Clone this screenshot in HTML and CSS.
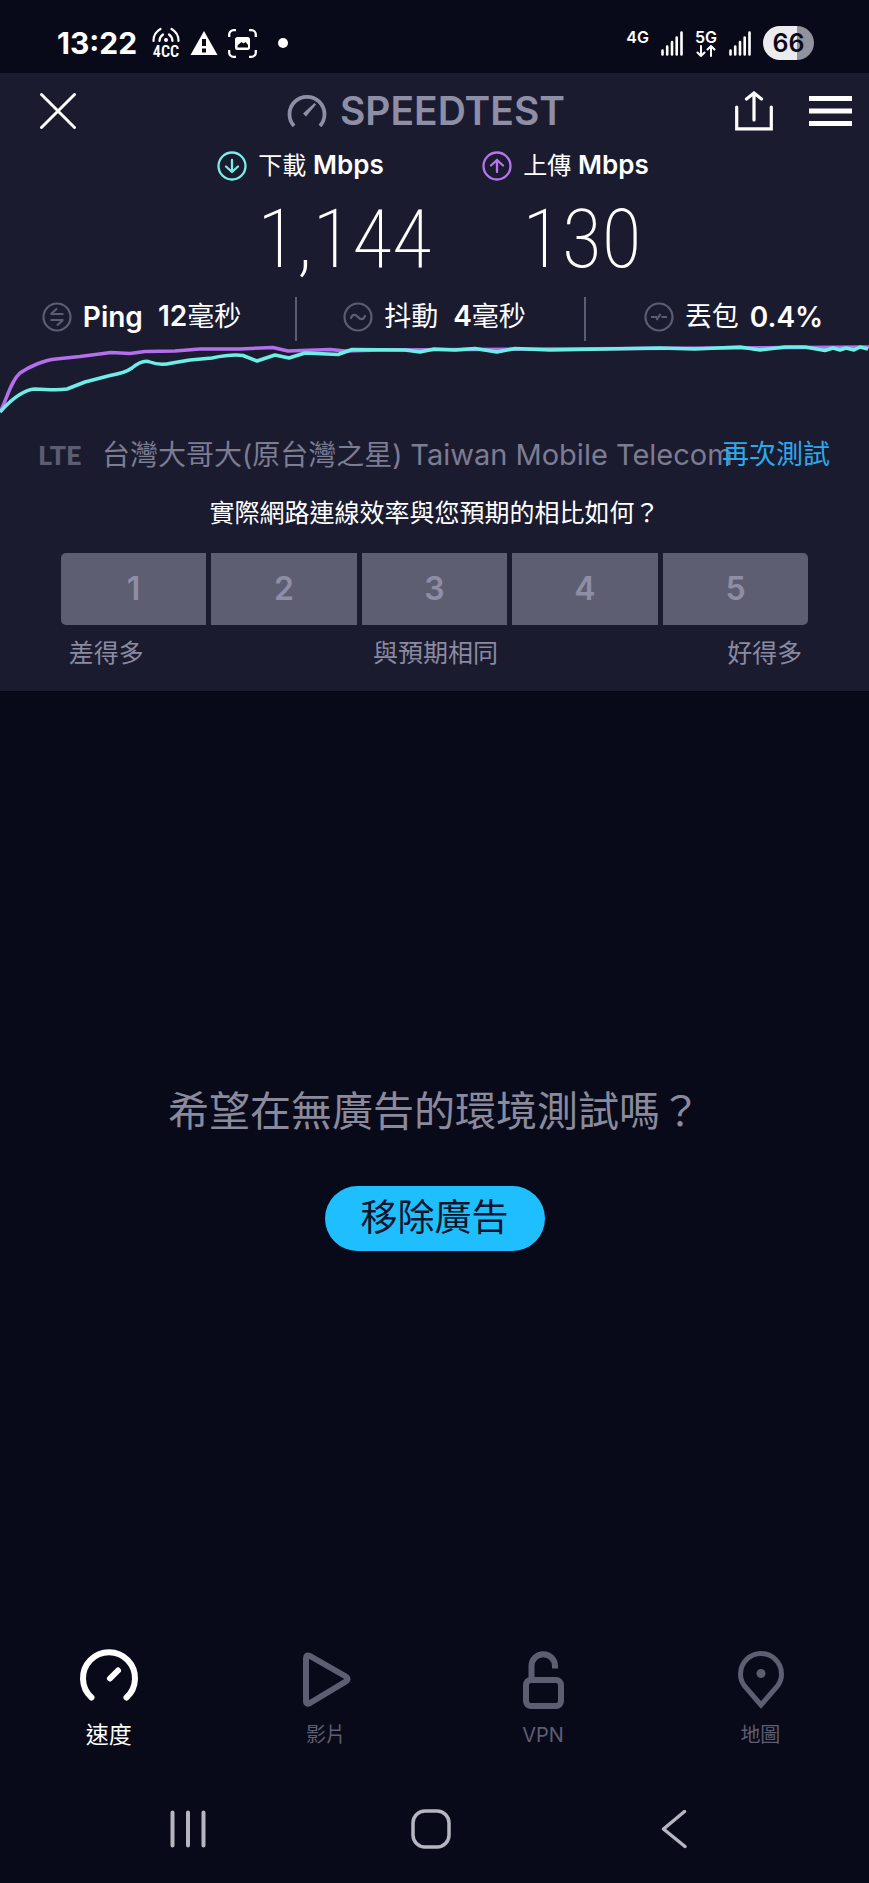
FILE: index.html
```html
<!DOCTYPE html>
<html lang="zh-Hant">
<head>
<meta charset="utf-8">
<meta name="viewport" content="width=device-width, initial-scale=1">
<title>Speedtest</title>
<link rel="stylesheet" href="styles.css">
</head>
<body>
<div class="app">
  <div class="status">
    <div class="status-left">
      <span class="clock">13:22</span>
      <svg class="signal-cc" width="28" height="36" viewBox="0 0 28 36" fill="none" stroke="#fff" stroke-width="2.2" stroke-linecap="round">
        <path d="M7.500 16A8 8 0 0 1 11 9.500M1.500 16A13.500 13.500 0 0 1 8.500 4M20.500 16A8 8 0 0 0 17 9.500M26.500 16A13.500 13.500 0 0 0 19.500 4"/>
        <circle cx="14" cy="15" r="2" fill="#fff" stroke="none"/>
        <text class="carrier-agg" x="14" y="32" text-anchor="middle">4CC</text>
      </svg>
      <svg width="28" height="26" viewBox="0 0 28 26"><path d="M14 1L27.500 25H.5z" fill="#fff"/><path d="M14 9v7M14 18.500v4" stroke="#090a19" stroke-width="4"/></svg>
      <svg width="29" height="29" viewBox="0 0 29 29" fill="none" stroke="#fff" stroke-width="2.300">
        <path d="M1.200 8V5.500a4.300 4.300 0 0 1 4.300-4.300H8M21 1.200h2.500a4.300 4.300 0 0 1 4.300 4.300V8M27.800 21v2.500a4.300 4.300 0 0 1-4.300 4.300H21M8 27.800H5.500a4.300 4.300 0 0 1-4.300-4.300V21"/>
        <rect x="7" y="8" width="15" height="13" rx="2.500" fill="#fff" stroke="none"/>
        <path d="M9.500 18.500v-2l4-3.500 2 1.500 2-1.500 2.500 3v2.500z" fill="#090a19" stroke="none"/>
      </svg>
      <span class="dot"></span>
    </div>
    <div class="status-right">
      <span class="net">4G</span>
      <svg width="22" height="25" viewBox="0 0 22 25" stroke="#fff" stroke-width="2.600" stroke-linecap="round"><path d="M1.500 19.500v4M6.200 15.500v8M11 11v12.500M15.700 6.500v17M20.500 1.500v22"/></svg>
      <span class="net">5G
        <svg width="20" height="12" viewBox="0 0 20 12" fill="none" stroke="#fff" stroke-width="2" stroke-linecap="round"><path d="M5 1v10M1.500 7.500L5 11l3.500-3.500M15 11V1M11.500 4.500L15 1l3.500 3.500"/></svg>
      </span>
      <svg width="22" height="25" viewBox="0 0 22 25" stroke="#fff" stroke-width="2.600" stroke-linecap="round"><path d="M1.500 19.500v4M6.200 15.500v8M11 11v12.500M15.700 6.500v17M20.500 1.500v22"/></svg>
      <span class="battery">66</span>
    </div>
  </div>

  <main class="panel">
    <header class="top">
      <button class="icon-btn close" aria-label="關閉"><svg width="36" height="36" viewBox="0 0 36 36" stroke="#fff" stroke-width="3" stroke-linecap="round"><path d="M1.500 1.500l33 33M34.500 1.500l-33 33"/></svg></button>
      <h1 class="brand">
        <svg width="40" height="36" viewBox="0 0 40 36" fill="none" stroke="#8e8ea6" stroke-width="3.800"><path d="M7 33A17.500 17.500 0 1 1 33 33"/><path d="M16 20.500L27.500 10l1.500 1.500L19 23.500z" fill="#8e8ea6" stroke="none"/></svg>
        SPEEDTEST
      </h1>
      <div class="actions">
        <button class="icon-btn" aria-label="分享"><svg width="38" height="40" viewBox="0 0 38 40" fill="none" stroke="#fff" stroke-width="3.200" stroke-linecap="round"><path d="M1.700 16v21.800h34.600V16M19 29V2M11.500 8L19 2l7.500 6"/></svg></button>
        <button class="icon-btn" aria-label="選單"><svg width="43" height="30" viewBox="0 0 43 30" stroke="#fff" stroke-width="5"><path d="M0 2.500h43M0 15h43M0 27.500h43"/></svg></button>
      </div>
    </header>

    <section class="speeds">
      <div class="speed">
        <h2 class="speed-label">
          <svg width="30" height="30" viewBox="0 0 30 30" fill="none" stroke="#78eee6" stroke-width="2.300" stroke-linecap="round" stroke-linejoin="round"><circle cx="15" cy="15" r="13.500"/><path d="M15 9v12M9 15.500l6 5.500 6-5.500"/></svg>
          <span>下載 <b>Mbps</b></span>
        </h2>
        <p class="speed-value">1,144</p>
      </div>
      <div class="speed">
        <h2 class="speed-label">
          <svg width="30" height="30" viewBox="0 0 30 30" fill="none" stroke="#b873ef" stroke-width="2.300" stroke-linecap="round" stroke-linejoin="round"><circle cx="15" cy="15" r="13.500"/><path d="M15 21V9M9 14.500L15 9l6 5.500"/></svg>
          <span>上傳 <b>Mbps</b></span>
        </h2>
        <p class="speed-value">130</p>
      </div>
    </section>

    <section class="stats">
      <div class="stat">
        <svg width="30" height="30" viewBox="0 0 30 30" fill="none" stroke="#5c5c72" stroke-width="2.200"><circle cx="15" cy="15" r="13.500"/><path d="M8.500 12h13M9 12l6-5.500M21.500 18h-13M21 18l-6 5.500"/></svg>
        <b class="stat-name">Ping</b><span><b>12</b>毫秒</span>
      </div>
      <div class="stat">
        <svg width="30" height="30" viewBox="0 0 30 30" fill="none" stroke="#5c5c72" stroke-width="2.200" stroke-linecap="round"><circle cx="15" cy="15" r="13.500"/><path d="M8 16c1.500-4 4.500-4 7-1s5.500 3 7-1"/></svg>
        <span class="stat-name">抖動</span><span><b>4</b>毫秒</span>
      </div>
      <div class="stat loss">
        <svg width="30" height="30" viewBox="0 0 30 30" fill="none" stroke="#5c5c72" stroke-width="2.200"><circle cx="15" cy="15" r="13.500"/><path d="M7 15h6M17.500 15H23M12.500 18l4-6"/></svg>
        <span>丟包</span><b>0.4%</b>
      </div>
    </section>

    <svg class="chart" viewBox="0 0 869 74" preserveAspectRatio="none" fill="none" stroke-width="3.500" stroke-linejoin="round">
      <path stroke="#b46fec" d="M1 69C8 55 11 40 20 32C30 25 45 19 56 18L80 15.500L111 11.500L130 12.500L145 10.500L175 10L200 8L240 8L273 6.500L288 10L330 8.500L345 10L380 9L869 6"/>
      <path stroke="#6feee8" d="M0 71C8 62 22 49 35 48C45 48 55 50 67 48L85 41L110 34.500Q125 32 132 27Q143 18 150 21Q160 25 172 22L190 19L212 17Q232 13 243 14.500L257 20L275 14L289 17L305 12L338 13.500L352 8.500L405 9L420 11L434 8L455 9L475 7.500L497 11L515 7.500L550 9L660 7L695 8L740 6L760 9L785 6L805 6L825 9.500L833 7L840 9L846 7L854 9L860 6L868 8"/>
    </svg>

    <section class="network">
      <span class="tech">LTE</span>
      <span class="carrier">台灣大哥大(原台灣之星) <span class="carrier-latin">Taiwan Mobile Telecom</span></span>
      <a class="retest" href="#retest">再次測試</a>
    </section>

    <section class="survey">
      <h2 class="question">實際網路連線效率與您預期的相比如何？</h2>
      <div class="scores">
        <button class="score">1</button>
        <button class="score">2</button>
        <button class="score">3</button>
        <button class="score">4</button>
        <button class="score">5</button>
      </div>
      <div class="legend"><span>差得多</span><span>與預期相同</span><span>好得多</span></div>
    </section>
  </main>

  <section class="upsell">
    <p class="upsell-text">希望在無廣告的環境測試嗎？</p>
    <button class="upsell-btn">移除廣告</button>
  </section>

  <nav class="tabs">
    <a class="tab active" href="#speed">
      <svg width="60" height="60" viewBox="0 0 60 60" fill="none" stroke="currentColor" stroke-width="6" stroke-linecap="round"><path d="M12.500 48.500A26 26 0 1 1 47.500 48.500M31 29.500l8-8"/></svg>
      速度
    </a>
    <a class="tab" href="#video">
      <svg width="60" height="60" viewBox="0 0 60 60" fill="none" stroke="currentColor" stroke-width="6" stroke-linejoin="round"><path d="M10 9.500Q10 5 14 7L49 27Q54 30 49 33L14 54Q10 56 10 52z"/></svg>
      影片
    </a>
    <a class="tab" href="#vpn">
      <svg width="60" height="60" viewBox="0 0 60 60" fill="none" stroke="currentColor" stroke-width="6"><rect x="13" y="31" width="35" height="26" rx="5"/><path d="M18.500 30V17a11.500 11.500 0 0 1 23.500 0v2.500"/></svg>
      VPN
    </a>
    <a class="tab" href="#map">
      <svg width="60" height="60" viewBox="0 0 60 60" fill="none" stroke="currentColor" stroke-width="5"><path d="M31 56L14.500 37C11.500 33 10.500 29 10.500 25a20.500 20.500 0 0 1 41 0c0 4-1 8-4 12z"/><circle cx="31" cy="24.500" r="4.500" fill="currentColor" stroke="none"/></svg>
      地圖
    </a>
  </nav>

  <div class="system">
    <button class="icon-btn" aria-label="最近"><svg width="36" height="40" viewBox="0 0 36 40" stroke="#b6b6c0" stroke-width="4" stroke-linecap="round"><path d="M2.500 3.500v33M18 3.500v33M33.500 3.500v33"/></svg></button>
    <button class="icon-btn" aria-label="首頁"><svg width="40" height="40" viewBox="0 0 40 40" fill="none" stroke="#b6b6c0" stroke-width="3.500"><rect x="2" y="2" width="36" height="36" rx="12"/></svg></button>
    <button class="icon-btn" aria-label="返回"><svg width="26" height="40" viewBox="0 0 26 40" fill="none" stroke="#b6b6c0" stroke-width="3.500" stroke-linecap="round" stroke-linejoin="round"><path d="M23.500 2.500L2.500 20l21.500 17.500"/></svg></button>
  </div>
</div>
</body>
</html>
```
FILE: styles.css
```css
* { box-sizing: border-box; margin: 0; padding: 0; }

body {
  background: #090a19;
  color: #fff;
  font-family: Inter, "Noto Sans CJK TC", sans-serif;
}

svg { display: block; flex: none; }
button { border: 0; background: none; font: inherit; color: inherit; cursor: pointer; }
a { color: inherit; text-decoration: none; }
h1, h2 { font-weight: 400; }

.app { display: flex; flex-direction: column; min-height: 100vh; }

.status {
  display: flex;
  justify-content: space-between;
  align-items: center;
  height: 73px;
  padding: 13px 55px 0 57px;
}
.status-left { display: flex; align-items: center; gap: 10px; }
.clock { font-size: 30px; line-height: 34px; font-weight: 700; margin-right: 5px; }
.signal-cc { overflow: visible; }
.carrier-agg { font: 600 16px "Roboto Condensed", sans-serif; fill: #fff; stroke: none; }
.dot { width: 10px; height: 10px; border-radius: 50%; background: #fff; margin-left: 11px; }
.status-right { display: flex; align-items: center; gap: 12px; }
.net {
  display: flex;
  flex-direction: column;
  align-items: center;
  height: 28px;
  font-size: 16px;
  line-height: 16px;
  font-weight: 600;
}
.battery {
  width: 51px;
  height: 34px;
  border-radius: 17px;
  background: linear-gradient(90deg, #ececf0 66%, #92929c 66%);
  color: #090a19;
  font-size: 25px;
  line-height: 34px;
  font-weight: 600;
  text-align: center;
}

.panel { background: #1b1b2f; padding-bottom: 18px; }

.top {
  display: grid;
  grid-template-columns: 1fr auto 1fr;
  align-items: center;
  height: 76px;
  padding-right: 17px;
}
.close { justify-self: start; margin-left: 40px; }
.brand {
  display: flex;
  align-items: center;
  gap: 13px;
  color: #8e8ea6;
  font-size: 39px;
  line-height: 44px;
  font-weight: 600;
}
.actions { display: flex; align-items: center; justify-content: flex-end; gap: 36px; }

.speeds { display: grid; grid-template-columns: 1fr 1fr; padding: 0 14% 0 25%; }
.speed-label {
  display: flex;
  align-items: center;
  gap: 11px;
  height: 33px;
  font-size: 24px;
  line-height: 34px;
}
.speed-label b { font-size: 26px; font-weight: 600; }
.speed-value {
  padding-left: 40px;
  font-family: "Roboto Condensed", "Open Sans Condensed", Roboto, sans-serif;
  font-size: 82px;
  line-height: 115px;
  font-weight: 200;
}

.stats { display: grid; grid-template-columns: 295fr 289fr 285fr; }
.stat {
  display: flex;
  align-items: center;
  justify-content: center;
  gap: 11px;
  height: 44px;
  padding: 0 12px 5px 0;
  font-size: 27px;
  line-height: 40px;
  white-space: nowrap;
}
.stat b { font-size: 28px; font-weight: 600; }
.stat + .stat { border-left: 2px solid #5c5c72; }
.stat-name { margin-right: 4px; }
.stats .loss { padding: 0 0 5px 12px; }

.chart { width: 100%; height: 74px; }

.network {
  display: flex;
  align-items: center;
  height: 48px;
  margin-top: 16px;
  padding: 0 39px 0 38px;
  font-size: 27px;
  line-height: 40px;
  white-space: nowrap;
}
.tech {
  width: 64px;
  flex: none;
  color: #5c5c72;
  font-family: Lato, sans-serif;
  font-weight: 900;
}
.carrier { flex: 1; min-width: 0; overflow: hidden; color: #7c7c92; font-size: 28px; margin-right: -15px; }
.carrier-latin { font-size: 29px; }
.retest { position: relative; color: #2aa9ec; }

.survey { padding: 0 7%; }
.question {
  margin-top: 14px;
  font-size: 25px;
  line-height: 40px;
  font-weight: 400;
  text-align: center;
}
.scores { display: grid; grid-template-columns: repeat(5, 1fr); gap: 5px; margin-top: 20px; }
.score {
  height: 72px;
  background: #5e5e73;
  color: #8e8ea6;
  font-size: 32px;
  line-height: 40px;
  font-weight: 600;
}
.score:first-child { border-radius: 5px 0 0 5px; }
.score:last-child { border-radius: 0 5px 5px 0; }
.legend {
  display: flex;
  justify-content: space-between;
  padding: 8px 6px 0 8px;
  color: #8a8aa0;
  font-size: 25px;
  line-height: 40px;
}

.upsell {
  flex: 1;
  display: flex;
  flex-direction: column;
  align-items: center;
  justify-content: center;
  gap: 50px;
  color: #8a8a9c;
}
.upsell-text { font-size: 41px; line-height: 50px; font-weight: 400; }
.upsell-btn {
  padding: 0 36px;
  height: 65px;
  border-radius: 33px;
  background: #1fbfff;
  color: #11152b;
  font-size: 37px;
  line-height: 64px;
  font-weight: 400;
}

.tabs { display: grid; grid-template-columns: repeat(4, 1fr); padding: 4px 0 28px; }
.tab {
  display: flex;
  flex-direction: column;
  align-items: center;
  gap: 10px;
  color: #5e5e73;
  font-size: 20px;
  line-height: 32px;
}
.tab.active { color: #fff; font-size: 23px; }

.system {
  display: grid;
  grid-template-columns: repeat(3, 1fr);
  align-items: center;
  justify-items: center;
  height: 104px;
  padding: 0 74px 4px 66px;
}
```
